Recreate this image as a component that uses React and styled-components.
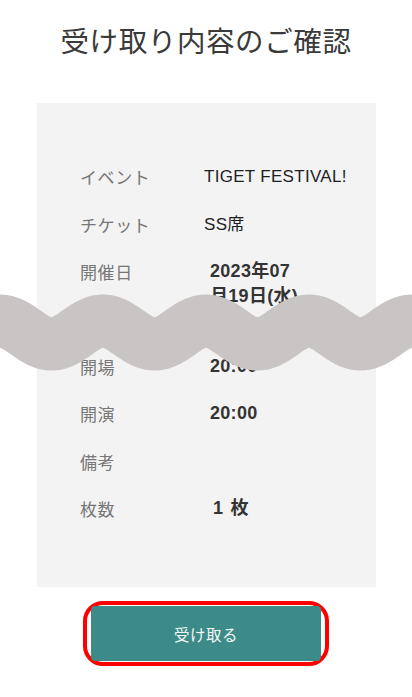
import React from 'react'
import styled, { createGlobalStyle } from 'styled-components'

const GlobalStyle = createGlobalStyle`
  html, body {
    margin: 0;
    padding: 0;
    background: #ffffff;
  }
  body {
    font-family: "Liberation Sans", "Noto Sans CJK JP", sans-serif;
  }
`

const Page = styled.div`
  width: 412px;
  min-height: 697px;
  display: flex;
  flex-direction: column;
  align-items: center;
  position: relative;
  overflow: hidden;
`

const Title = styled.h1`
  margin: 20px 0 0;
  font-family: "Noto Sans CJK JP", sans-serif;
  font-weight: 400;
  font-size: 28.5px;
  line-height: 40px;
  letter-spacing: 0.6px;
  color: #3a3a3a;
`

const Card = styled.div`
  margin-top: 43px;
  margin-left: 37px;
  align-self: flex-start;
  width: 339px;
  box-sizing: border-box;
  background: #f3f3f3;
  padding: 50px 20px 55px 43px;
  display: flex;
  flex-direction: column;
`

const Row = styled.div`
  display: flex;
  align-items: ${(p) => (p.$tall ? 'flex-start' : 'center')};
  height: ${(p) => (p.$tall ? 94.8 : 47.4)}px;
  padding-top: ${(p) => (p.$tall ? 11 : 0)}px;
  box-sizing: border-box;
`

const Label = styled.div`
  width: 124px;
  flex-shrink: 0;
  font-family: "Noto Sans CJK JP", sans-serif;
  font-size: 17px;
  letter-spacing: 0.6px;
  line-height: 25px;
  color: #767676;
`

const Value = styled.div`
  font-size: ${(p) => (p.$bold ? 18 : 17)}px;
  font-weight: ${(p) => (p.$bold ? 700 : 400)};
  padding-left: ${(p) => (p.$bold ? 6 : 0) + (p.$indent || 0)}px;
  line-height: 25px;
  color: ${(p) => (p.$bold ? '#333333' : '#1e1e1e')};
  letter-spacing: 0.3px;
  word-spacing: ${(p) => (p.$indent ? 2 : 0)}px;
`

const Wave = styled.svg`
  position: absolute;
  left: 0;
  top: 280px;
  display: block;
`

const Highlight = styled.div`
  margin-top: 14px;
  border: 4.5px solid #ff0000;
  border-radius: 20px;
  padding: 1px 4px;
  display: flex;
`

const ReceiveButton = styled.button`
  width: 230px;
  height: 55px;
  border: none;
  border-radius: 4px;
  background: #3d8b88;
  color: #f4f8f8;
  font-family: "Noto Sans CJK JP", sans-serif;
  font-size: 15.5px;
  letter-spacing: 0.5px;
  cursor: pointer;
`

const rows = [
  { label: 'イベント', value: 'TIGET FESTIVAL!' },
  { label: 'チケット', value: 'SS席' },
  { label: '開催日', value: ['2023年07', '月19日(水)'], bold: true, tall: true },
  { label: '開場', value: '20:00', bold: true },
  { label: '開演', value: '20:00', bold: true },
  { label: '備考', value: '' },
  { label: '枚数', value: '1 枚', bold: true, indent: 3 },
]

// centre line of the torn-paper wave, drawn as a thick stroke
const wavePath = () => {
  const pts = []
  for (let x = -20; x <= 432; x += 2) {
    const y = 52.5 - 11.5 * Math.cos((2 * Math.PI * x) / 103)
    pts.push(`${x},${y.toFixed(2)}`)
  }
  return `M${pts.join(' L')}`
}

const App = () => {
  return (
    <Page>
      <GlobalStyle />
      <Title>受け取り内容のご確認</Title>
      <Card>
        {rows.map((r) => (
          <Row key={r.label} $tall={r.tall}>
            <Label>{r.label}</Label>
            <Value $bold={r.bold} $indent={r.indent}>
              {Array.isArray(r.value)
                ? r.value.map((line) => <div key={line}>{line}</div>)
                : r.value}
            </Value>
          </Row>
        ))}
      </Card>
      <Highlight>
        <ReceiveButton>受け取る</ReceiveButton>
      </Highlight>
      <Wave width="412" height="110" viewBox="0 0 412 110">
        <path d={wavePath()} fill="none" stroke="#c8c5c4" strokeWidth="53" />
      </Wave>
    </Page>
  )
}

export default App
